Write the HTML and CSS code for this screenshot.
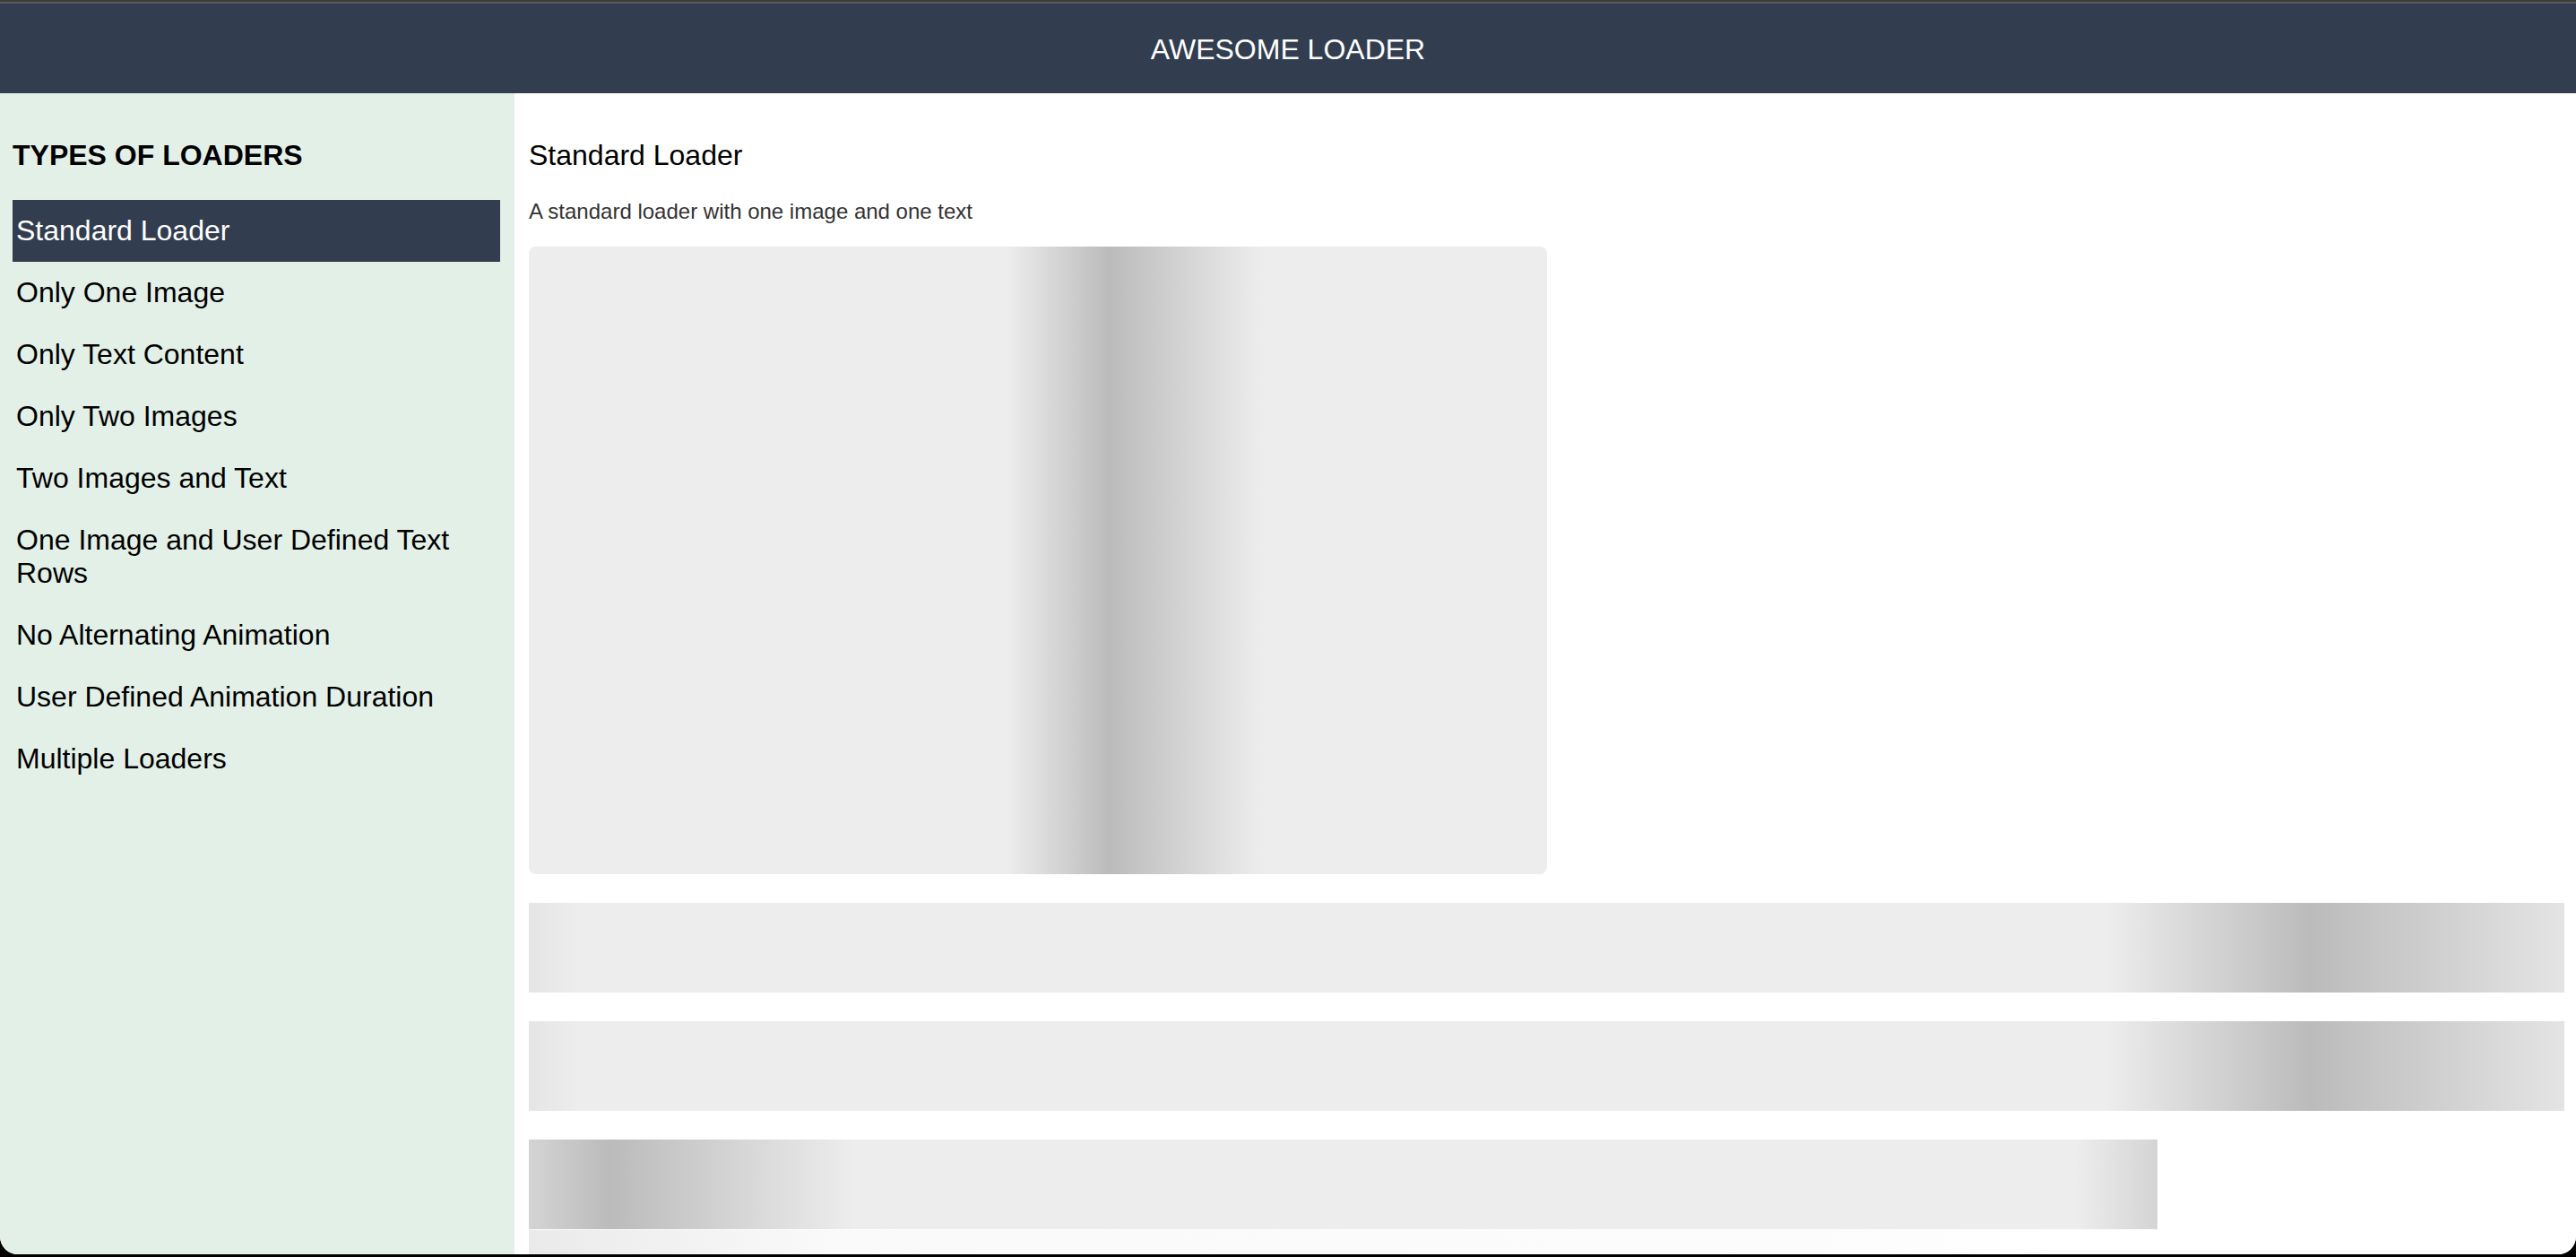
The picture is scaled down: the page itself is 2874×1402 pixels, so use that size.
FILE: index.html
```html
<!DOCTYPE html>
<html lang="en">
<head>
<meta charset="utf-8">
<title>Awesome Loader</title>
<link rel="stylesheet" href="styles.css">
</head>
<body>
<div class="window">
  <div class="frame-top"></div>
  <header class="app-header">AWESOME LOADER</header>
  <div class="layout">
    <aside class="sidebar">
      <div class="sidebar-title">TYPES OF LOADERS</div>
      <ul class="nav">
        <li class="nav-item active">Standard Loader</li>
        <li class="nav-item">Only One Image</li>
        <li class="nav-item">Only Text Content</li>
        <li class="nav-item">Only Two Images</li>
        <li class="nav-item">Two Images and Text</li>
        <li class="nav-item">One Image and User Defined Text Rows</li>
        <li class="nav-item">No Alternating Animation</li>
        <li class="nav-item">User Defined Animation Duration</li>
        <li class="nav-item">Multiple Loaders</li>
      </ul>
    </aside>
    <main class="content">
      <h2 class="content-title">Standard Loader</h2>
      <p class="content-desc">A standard loader with one image and one text</p>
      <div class="loader">
        <div class="skeleton skeleton-image"></div>
        <div class="skeleton skeleton-line line-a"></div>
        <div class="skeleton skeleton-line line-a"></div>
        <div class="skeleton skeleton-line line-short"></div>
        <div class="skeleton-ghost"></div>
      </div>
    </main>
  </div>
</div>
</body>
</html>
```

FILE: styles.css
```css
html, body {
  margin: 0;
  padding: 0;
  height: 100%;
}

body {
  background: #000;
  font-family: "Liberation Sans", Arial, Helvetica, sans-serif;
  overflow: hidden;
}

.window {
  height: 1399px;
  display: flex;
  flex-direction: column;
  background: #fff;
  border-radius: 0 0 20px 20px;
  overflow: hidden;
}

.frame-top {
  height: 2px;
  background: #3c3c3c;
  border-bottom: 2px solid #5b5b5b;
  flex: none;
}

.app-header {
  flex: none;
  height: 100px;
  background: #323e4f;
  color: #fff;
  font-size: 32px;
  line-height: 102px;
  text-align: center;
}

.layout {
  flex: 1;
  display: flex;
  min-height: 0;
}

.sidebar {
  flex: none;
  width: 574px;
  box-sizing: border-box;
  padding: 0 16px 0 14px;
  background: #e3f0e8;
}

.sidebar-title {
  margin: 51px 0 31px;
  font-size: 32px;
  line-height: 37px;
  font-weight: bold;
  color: #000;
}

.nav {
  list-style: none;
  margin: 0;
  padding: 0;
}

.nav-item {
  padding: 16px 4px;
  font-size: 32px;
  line-height: 37px;
  color: #000;
}

.nav-item.active {
  background: #323e4f;
  color: #fff;
}

.content {
  flex: 1;
  min-width: 0;
  padding: 51px 13px 0 16px;
  background: #fff;
}

.content-title {
  margin: 0;
  font-size: 32px;
  line-height: 37px;
  font-weight: normal;
  color: #000;
}

.content-desc {
  margin: 30px 0 25px;
  font-size: 24px;
  line-height: 28px;
  color: #333;
}

.loader {
  display: flex;
  flex-direction: column;
  gap: 32px;
}

.skeleton {
  background-color: #ededed;
}

.skeleton-image {
  width: 50%;
  height: 700px;
  border-radius: 8px;
  background-image: linear-gradient(to right, #ededed 47%, #bbbbbb 57%, #ededed 72%);
}

.skeleton-line {
  height: 100px;
}

.line-a {
  width: 100%;
  background-image: linear-gradient(to right, #e5e5e5 0%, #ededed 2.5%, #ededed 77.5%, #bbbbbb 87.5%, #e4e4e4 100%);
}

.line-short {
  width: 80%;
  background-image: linear-gradient(to right, #d4d4d4 0%, #bbbbbb 5%, #ededed 20%, #ededed 95%, #d4d4d4 100%);
}

.skeleton-ghost {
  margin-top: -31px;
  width: 75%;
  height: 30px;
  background: linear-gradient(to right, rgba(220,220,220,0.6), rgba(240,240,240,0.35) 20%, rgba(245,245,245,0.3) 85%, rgba(255,255,255,0));
}
```
